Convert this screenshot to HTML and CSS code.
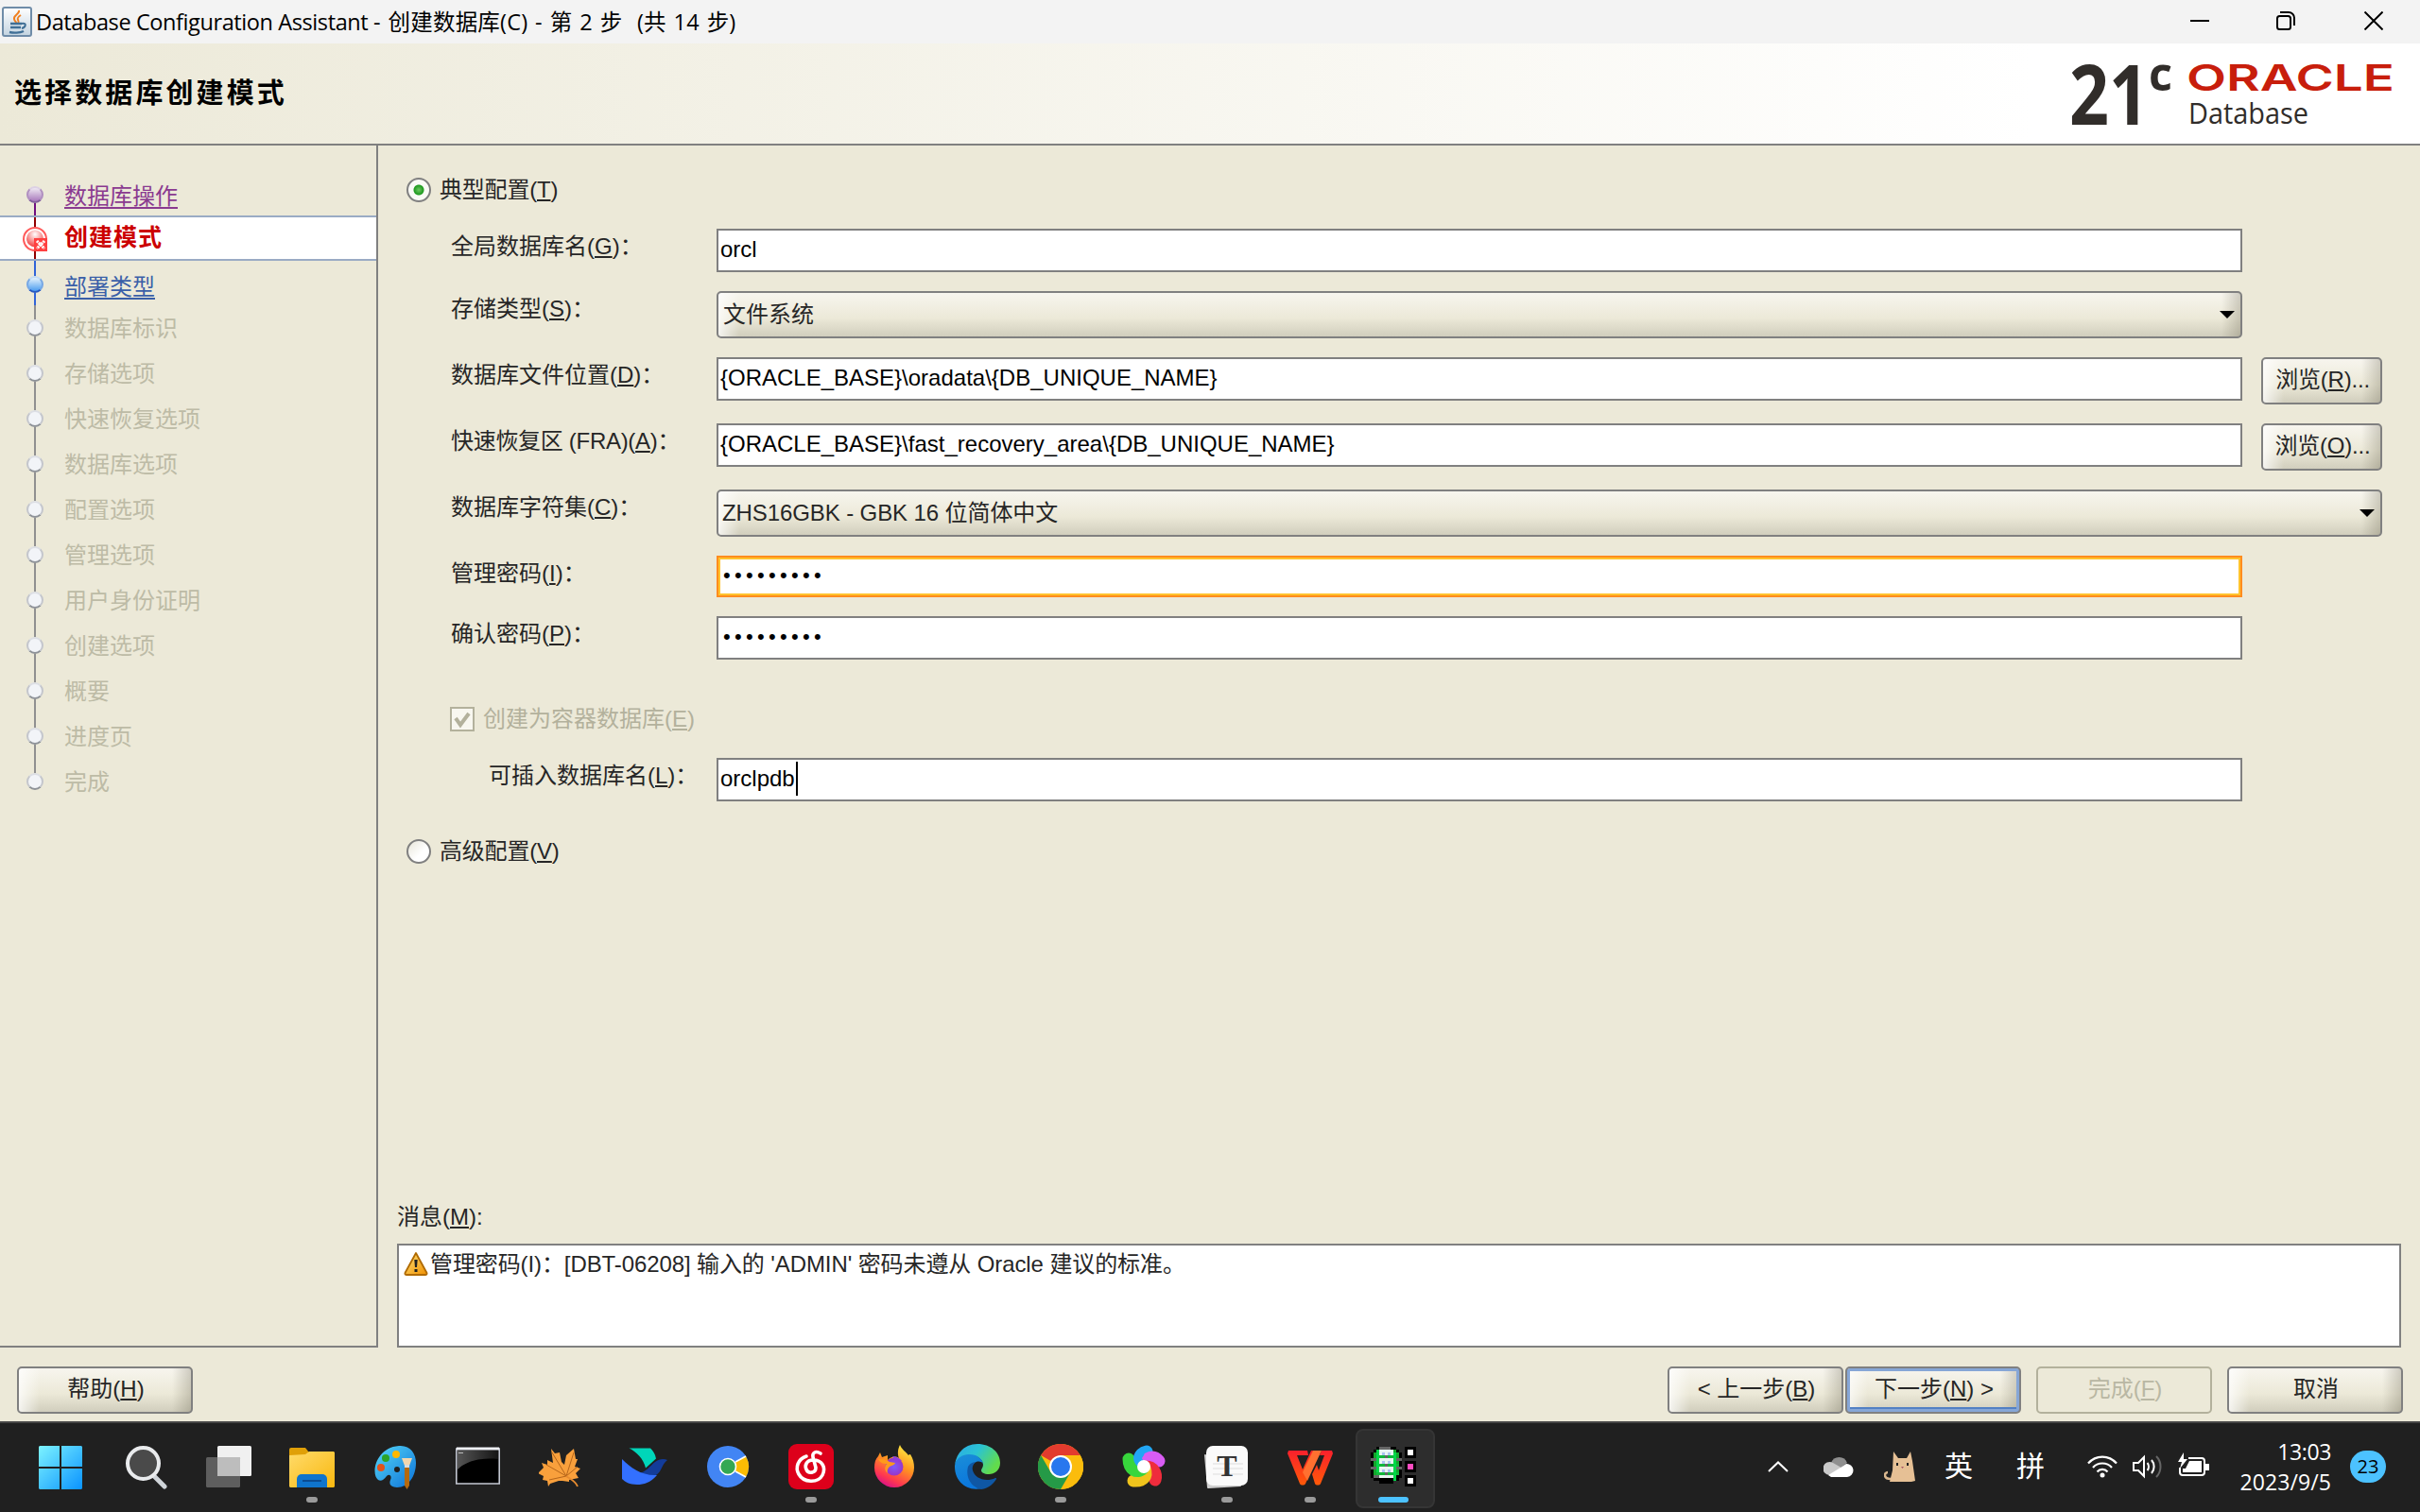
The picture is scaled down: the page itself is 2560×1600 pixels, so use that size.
FILE: index.html
```html
<!DOCTYPE html>
<html lang="zh-CN">
<head>
<meta charset="utf-8">
<title>Database Configuration Assistant</title>
<link rel="stylesheet" href="styles.css">
</head>
<body>
<header class="titlebar">
  <svg class="java" width="32" height="32" viewBox="0 0 32 32">
    <defs><linearGradient id="jv" x1="0" y1="0" x2="0" y2="1"><stop offset="0" stop-color="#fff"/><stop offset="1" stop-color="#c3d3e0"/></linearGradient></defs>
    <rect x="1" y="1" width="30" height="30" rx="2" fill="url(#jv)" stroke="#6f8ca8" stroke-width="2"/>
    <path d="M18 4c1 4-6 5-5 9 0 2 2 3 2 4M20 9c-3 2-4 3-3 5 1 2 1 2 0 4" fill="none" stroke="#f08020" stroke-width="2"/>
    <path d="M9 18h12M9 22h11M8 27c4 1 11 1 15-1" fill="none" stroke="#3f6f96" stroke-width="2.4"/>
    <path d="M21 18c6-1 4 4 0 5" fill="none" stroke="#3f6f96" stroke-width="2"/>
  </svg>
  <span class="title">Database Configuration Assistant <span class="sub">- 创建数据库(C) - 第 2 步&nbsp; (共 14 步)</span></span>
  <svg class="winbtns" width="204" height="20" viewBox="0 0 204 20" fill="none" stroke="#000" stroke-width="2">
    <path d="M0 10h20M184.500.500l19 19M203.500.500l-19 19"/>
    <rect x="92" y="5" width="14" height="14" rx="2.500"/>
    <path d="M95 1h9a6 6 0 0 1 6 6v8"/>
  </svg>
</header>

<section class="banner">
  <h1>选择数据库创建模式</h1>
  <svg class="logo" width="346" height="80" viewBox="0 0 346 80">
    <text class="lg-num" x="0" y="73" textLength="84" lengthAdjust="spacingAndGlyphs">21</text>
    <text class="lg-c" x="84" y="37" textLength="25" lengthAdjust="spacingAndGlyphs">c</text>
    <text class="lg-oracle" x="124" y="37" textLength="220" lengthAdjust="spacingAndGlyphs">ORACLE</text>
    <text class="lg-db" x="126" y="72" textLength="127" lengthAdjust="spacingAndGlyphs">Database</text>
  </svg>
</section>

<div class="work">
  <ol class="steps">
    <li class="first"><i class="rail"><b></b></i><span>数据库操作</span></li>
    <li class="current"><i class="rail"><svg width="26" height="26" viewBox="0 0 26 26">
      <defs><radialGradient id="rd" cx=".5" cy=".25" r=".8"><stop offset="0" stop-color="#fff"/><stop offset="1" stop-color="#f03030"/></radialGradient></defs>
      <circle cx="13" cy="13" r="12" fill="#fff" stroke="#ff5a5a" stroke-width="2"/><circle cx="13" cy="12.500" r="9" fill="url(#rd)"/>
      <path d="M12 12h14v14H12z" fill="#ff4040"/><path d="M15 15l8 8M23 15l-8 8" stroke="#fff" stroke-width="3" stroke-dasharray="2 .7"/></svg></i><span>创建模式</span></li>
    <li class="next"><i class="rail"><b></b></i><span>部署类型</span></li>
    <li><i class="rail"><b></b></i><span>数据库标识</span></li>
    <li><i class="rail"><b></b></i><span>存储选项</span></li>
    <li><i class="rail"><b></b></i><span>快速恢复选项</span></li>
    <li><i class="rail"><b></b></i><span>数据库选项</span></li>
    <li><i class="rail"><b></b></i><span>配置选项</span></li>
    <li><i class="rail"><b></b></i><span>管理选项</span></li>
    <li><i class="rail"><b></b></i><span>用户身份证明</span></li>
    <li><i class="rail"><b></b></i><span>创建选项</span></li>
    <li><i class="rail"><b></b></i><span>概要</span></li>
    <li><i class="rail"><b></b></i><span>进度页</span></li>
    <li class="last"><i class="rail"><b></b></i><span>完成</span></li>
  </ol>

  <main class="content">
    <div class="radio typical"><i class="dot on"></i><span>典型配置(<u>T</u>)</span></div>
    <div class="row"><label>全局数据库名(<u>G</u>)：</label><div class="field">orcl</div></div>
    <div class="row g20"><label>存储类型(<u>S</u>)：</label><div class="combo">文件系统</div></div>
    <div class="row g20"><label>数据库文件位置(<u>D</u>)：</label><div class="field">{ORACLE_BASE}\oradata\{DB_UNIQUE_NAME}</div><button class="btn browse">浏览(<u>R</u>)...</button></div>
    <div class="row g20"><label class="fra">快速恢复区 (FRA)(<u>A</u>)：</label><div class="field">{ORACLE_BASE}\fast_recovery_area\{DB_UNIQUE_NAME}</div><button class="btn browse">浏览(<u>O</u>)...</button></div>
    <div class="row g20"><label>数据库字符集(<u>C</u>)：</label><div class="combo wide">ZHS16GBK - GBK 16 位简体中文</div></div>
    <div class="row g20"><label>管理密码(<u>I</u>)：</label><div class="field pw focus">•••••••••</div></div>
    <div class="row g20"><label>确认密码(<u>P</u>)：</label><div class="field pw">•••••••••</div></div>
    <div class="check"><svg width="26" height="26" viewBox="0 0 26 26"><rect x="1" y="1" width="24" height="24" fill="#f8f7f0" stroke="#b3b19c" stroke-width="2"/><path d="M6 12l5 7 9-12" fill="none" stroke="#b3b19c" stroke-width="4"/></svg><span>创建为容器数据库(<u>E</u>)</span></div>
    <div class="row pdb"><label>可插入数据库名(<u>L</u>)：</label><div class="field">orclpdb<i class="caret"></i></div></div>
    <div class="radio advanced"><i class="dot"></i><span>高级配置(<u>V</u>)</span></div>
    <div class="msg-label">消息(<u>M</u>):</div>
    <div class="msg"><svg width="26" height="26" viewBox="0 0 26 26">
      <defs><linearGradient id="wn" x1="0" y1="0" x2="1" y2="1"><stop offset="0" stop-color="#ffe27a"/><stop offset="1" stop-color="#f09000"/></linearGradient></defs>
      <path d="M13 2L24.500 23a1.500 1.500 0 0 1-1 2H2.500a1.500 1.500 0 0 1-1-2z" fill="url(#wn)" stroke="#b06a00" stroke-width="1.800" stroke-linejoin="round"/><path d="M11.300 9h3.400l-.7 8h-2zM11.500 19h3v3h-3z" fill="#222"/></svg><span>管理密码(I)：[DBT-06208] 输入的 'ADMIN' 密码未遵从 Oracle 建议的标准。</span></div>
  </main>
</div>

<footer class="actions">
  <button class="btn">帮助(<u>H</u>)</button>
  <button class="btn prev">&lt; 上一步(<u>B</u>)</button>
  <button class="btn default">下一步(<u>N</u>) &gt;</button>
  <button class="btn disabled">完成(<u>F</u>)</button>
  <button class="btn">取消</button>
</footer>

<nav class="taskbar">
  <div class="apps">
    <div class="app start"><svg viewBox="0 0 48 48"><defs><linearGradient id="wi" gradientUnits="userSpaceOnUse" x1="1" y1="2" x2="47" y2="48"><stop offset="0" stop-color="#7df3ff"/><stop offset="1" stop-color="#0a93ff"/></linearGradient></defs><path d="M2 2h21v22H1V3zM25 2h21l1 1v21H25zM1 26h22v22H2l-1-1zM25 26h22v21l-1 1H25z" fill="url(#wi)"/></svg></div>
    <div class="app"><svg viewBox="0 0 48 48"><path d="M32 33l12 12" stroke="#cfd4d9" stroke-width="5" stroke-linecap="round"/><circle cx="21.500" cy="20.500" r="16.500" fill="#4a4a4a" stroke="#e9ebed" stroke-width="4"/></svg></div>
    <div class="app"><svg viewBox="0 0 48 48"><rect x="12" y="2" width="36" height="32" rx="1.500" fill="#f0f0f0"/><rect y="14" width="36" height="32" rx="1.500" fill="#5e5e5e"/><path d="M12 14h24v20H12z" fill="#bdbdbd"/></svg></div>
    <div class="app run"><svg viewBox="0 0 48 48"><defs><linearGradient id="fd" x1="0" y1="0" x2="1" y2="1"><stop offset="0" stop-color="#ffdb6b"/><stop offset="1" stop-color="#f9b80f"/></linearGradient></defs><path d="M0 6a2 2 0 0 1 2-2h15l4 5v6H0z" fill="#e0a008"/><path d="M0 12l17-1 4-3h26l1 1v36l-1 1H1l-1-1z" fill="url(#fd)"/><path d="M8 46V37a5 5 0 0 1 5-5h22a5 5 0 0 1 5 5v9z" fill="#0f74cc"/><path d="M14 39h20" stroke="#0a4c92" stroke-width="2"/></svg></div>
    <div class="app"><svg viewBox="0 0 48 48"><defs><linearGradient id="pt" x1="0" y1="0" x2="1" y2="1"><stop offset="0" stop-color="#56d8f8"/><stop offset="1" stop-color="#0c72d8"/></linearGradient></defs><path d="M28 2c12-1 18 8 18 18 0 14-8 26-20 26-6 0-9-3-7-8 2-4-1-7-4-4-3 4-6 6-9 4-8-6-3-34 22-36z" fill="url(#pt)"/><ellipse cx="14" cy="15" rx="4" ry="4" fill="#2ba428"/><circle cx="25" cy="11" r="4" fill="#ffb800"/><circle cx="9" cy="25" r="4" fill="#e2531c"/><circle cx="26" cy="27" r="3" fill="#202020"/><path d="M31 15h11l-3 8h-5z" fill="#f2d6ae"/><path d="M34 22h5v4h-5z" fill="#d8dce0"/><path d="M34 25h5v19l-2.500 4L34 44z" fill="#b4690e"/></svg></div>
    <div class="app"><svg viewBox="0 0 48 48"><defs><linearGradient id="cm" x1="0" y1="0" x2="1" y2="0"><stop offset="0" stop-color="#555"/><stop offset="1" stop-color="#151515"/></linearGradient></defs><path d="M.8 5h45.400v37H.8z" fill="#000" stroke="#c3c7d2" stroke-width="1.600"/><path d="M2 7h43v9C24 14 10 19 2 27z" fill="url(#cm)"/><path d="M1 5h45" stroke="#eef0f6" stroke-width="3"/><path d="M3 9.500h5" stroke="#bbb"/></svg></div>
    <div class="app"><svg viewBox="0 0 48 48"><path d="M13 5l4 5 5-1 2 10 3 3 2-10 8-7 2 11 2 0-3 8 6 2-5 5 3 5-10 2 0 2-7-1-4 0-9 3-2 3-1-6-5-1 1-4-6-3 6-6-2-5 6 2 0-5 6 3z" fill="#f9a03c"/><path d="M29 34L14 9M29 34l8-25M29 34l12-10M29 34L8 22M29 34l-18 4" fill="none" stroke="#b5651a" stroke-width="1"/><path d="M29 34c4 3 10 5 12 11" fill="none" stroke="#e88c30" stroke-width="1.800"/></svg></div>
    <div class="app"><svg viewBox="0 0 48 48"><path d="M7.500 4.500H30c3 3 5 6 6 11l-11 10C23 16 15 8 7.500 4.500z" fill="#00d6b9"/><path d="M48 17c-4 3-5 7-8 12-7 10-17 5-22 2 7-1 12-8 17-12 4-3 9-4 13-2z" fill="#133c9a"/><path d="M0 16c9 9 21 18 37 17-7 8-14 10-21 10-8 0-13-3-16-6z" fill="#3370ff"/></svg></div>
    <div class="app"><svg viewBox="0 0 48 48"><circle cx="24" cy="24" r="22" fill="#4285f4"/><path d="M32 19l11-6a22 22 0 0 1 0 22l-11-6z" fill="#fbbc04"/><path d="M32 19l11-6M32 29l11 6" stroke="#fff" stroke-width="1.600"/><circle cx="24" cy="24" r="8.500" fill="#34a853" stroke="#fff" stroke-width="1.600"/></svg></div>
    <div class="app run"><svg viewBox="0 0 48 48"><rect width="48" height="48" rx="9" fill="#dd001b"/><path d="M19 13C10 16 7 25 11 32c5 9 20 10 25 1 4-8 0-16-10-16-7 0-9 6-7 10 2 5 10 4 10-2l-3-11c-1-5 3-7 8-4" fill="none" stroke="#fff" stroke-width="3.600" stroke-linecap="round"/></svg></div>
    <div class="app"><svg viewBox="0 0 48 48"><defs><linearGradient id="fx" x1=".8" y1="0" x2=".3" y2="1"><stop offset="0" stop-color="#fff044"/><stop offset=".45" stop-color="#ff9420"/><stop offset=".8" stop-color="#ff3750"/><stop offset="1" stop-color="#d6108c"/></linearGradient><radialGradient id="fp"><stop offset="0" stop-color="#7a5cff"/><stop offset="1" stop-color="#9a35c8"/></radialGradient></defs><path d="M30 1c2 5 6 7 9 11 1-1 1-1 2-1 3 5 4 9 4 14a21 21 0 0 1-42 0c0-5 1-9 4-12l2-4 2 5 6-2v5c3-3 8-5 12-2-2-5-1-10 1-14z" fill="url(#fx)"/><circle cx="24" cy="24" r="9.500" fill="url(#fp)"/><path d="M7 16c5-1 9 1 12 3l6 1c-1 3-5 3-6 4-2 2-3 4-2 7-4-3-3-8-1-10-4 0-7-1-9-5z" fill="#ff9a1c"/><path d="M22 13c4 0 8 2 10 5-3-1-5 0-6 1" fill="#8f3fe0"/></svg></div>
    <div class="app"><svg viewBox="0 0 48 48"><defs><linearGradient id="eg" x1="0" y1="0" x2="1" y2=".5"><stop offset="0" stop-color="#2aa8e8"/><stop offset=".5" stop-color="#2bc3d2"/><stop offset="1" stop-color="#62dc4c"/></linearGradient><linearGradient id="eb" x1="0" y1="0" x2=".3" y2="1"><stop offset="0" stop-color="#1b8fd8"/><stop offset="1" stop-color="#0a76dc"/></linearGradient></defs><path d="M0 22C2 8 12 0 24 0c14 0 24 9 24 20 0 8-6 12-12 12-5 0-8-2-8-4s2-3 2-6c0-5-5-10-14-10C8 12 2 16 0 22z" fill="url(#eg)"/><path d="M0 24c0-7 6-13 15-13 9 0 14 5 15 10-2-3-6-3-9-1-6 4-4 14 2 18l6 9c-17 4-29-8-29-23z" fill="url(#eb)"/><path d="M14 24c-3 12 4 22 14 24 8-1 14-7 16-11 0-1 0-1-1-1-11 5-22 0-24-8-1-4 1-8 4-9-5 0-8 3-9 5z" fill="#0f57a4"/></svg></div>
    <div class="app run"><svg viewBox="0 0 48 48"><circle cx="24" cy="24" r="24" fill="#fbbc0c"/><path d="M24 24L3.200 12a24 24 0 0 1 41.600 0z" fill="#e33b2e"/><path d="M24 12h20.800A24 24 0 0 1 24 48l10.400-18z" fill="#fbbc0c"/><path d="M3.200 12A24 24 0 0 0 24 48l10.400-18-20.800 0z" fill="#259a47"/><circle cx="24" cy="24" r="12" fill="#fff"/><circle cx="24" cy="24" r="10" fill="#2877ee"/></svg></div>
    <div class="app"><svg viewBox="0 0 48 48"><g fill="none" stroke-width="13" stroke-linecap="round"><path d="M24 22C18 17 19 10 27 8" stroke="#22a6f4"/><path d="M25 22C26 14 34 11 40 18" stroke="#d95cf4"/><path d="M26 24c8 0 12 7 10 14" stroke="#ef2c3c"/><path d="M25 26c3 8-1 14-12 13" stroke="#f0c41c"/><path d="M23 26C17 32 8 27 8 16" stroke="#37d63c"/><path d="M22 22C17 18 16 14 20 10" stroke="#22a6f4" stroke-width="9"/></g><circle cx="24" cy="24" r="7" fill="#fff"/></svg></div>
    <div class="app run"><svg viewBox="0 0 48 48"><path d="M1 12l3 34 34-2z" fill="#cfcfcf" stroke="#cfcfcf" stroke-width="2" stroke-linejoin="round"/><rect x="2" y="2" width="44" height="42" rx="7" fill="#fafafa"/><path d="M9 21h32M9 26h32M9 32h32" stroke="#ddd"/><text class="typora" x="24" y="34" text-anchor="middle">T</text></svg></div>
    <div class="app run"><svg viewBox="0 0 48 48"><defs><linearGradient id="wp" x1="0" y1="0" x2="0" y2="1"><stop offset="0" stop-color="#f9202c"/><stop offset="1" stop-color="#ff5a08"/></linearGradient></defs><path d="M1 7h20l1 5H10l6 15 9-20h10L19 42c-1 2-5 2-6 0L0 10z" fill="url(#wp)"/><path d="M36 7h11l1 3-13 32c-1 2-5 2-6 0l-3-10 5-10 2 6 6-16h-5z" fill="url(#wp)"/><path d="M27 7h9L21 39l-5-9z" fill="#ff7030"/></svg></div>
    <div class="app active"><svg viewBox="0 0 48 48" shape-rendering="crispEdges"><path d="M6 3h21v3h3v3h3v27h-3v3h-6v3H9v-3H3v-3H0V9h3V6h3z" fill="#000"/><path d="M6 6h21v3h3v24h-3v3H6v-3H3V9h3z" fill="#14a52c"/><path d="M9 6h15v30H9z" fill="#e8f6f2"/><path d="M9 12h18v3H6zM6 21h24v3H6zM6 30h24v3H6z" fill="#10b83a"/><path d="M0 15h6v3H0zM24 15h9v3h-9zM0 24h6v3H0zM24 24h9v3h-9zM3 33h6v3H3zM15 12h3v3h-3zM15 21h3v3h-3zM15 30h3v3h-3zM9 3h12v3H9z" fill="#666"/><path d="M12 9h3v3h-3zM18 9h3v3h-3zM12 18h3v3h-3zM18 18h3v3h-3zM12 27h3v3h-3zM18 27h3v3h-3z" fill="#a9c4f0"/><path d="M6 6h3v24H6zM24 9h3v30h-3z" fill="#00d848"/><path d="M36 3h12v12H36zM36 18h12v12H36zM36 33h12v12H36z" fill="#000"/><path d="M39 6h6v6h-6zM39 36h6v6h-6z" fill="#fff"/><path d="M39 21h6v6h-6z" fill="#ff4cc0"/></svg></div>
  </div>
  <div class="tray">
    <svg class="t-chev" width="22" height="12" viewBox="0 0 22 12"><path d="M1 11L11 1.500 21 11" fill="none" stroke="#fff" stroke-width="2"/></svg>
    <svg class="t-cloud" width="32" height="22" viewBox="0 0 32 22"><path d="M8 7a9 9 0 0 1 17 0l-8 6z" fill="#8f8f8f"/><path d="M7 20a7 7 0 1 1 3-13l14 8-12 6z" fill="#c9c9c9"/><path d="M5 20l13-8 6-4a7 7 0 0 1 1 14H8z" fill="#fff"/></svg>
    <svg class="t-cat" width="33" height="32" viewBox="0 0 33 32"><path d="M7 29c-8 0-7-7-3-7" fill="none" stroke="#d9b78f" stroke-width="2.500"/><path d="M10 0l5 7h9l4-7 2 10 3 21-4 1H6l3-12z" fill="#e6c095"/><path d="M13 12h2v3h-2zM24 12h2v3h-2z" fill="#222"/><path d="M18 16h3l-1.500 2z" fill="#a56"/></svg>
    <span class="ime">英</span>
    <span class="ime two">拼</span>
    <svg class="t-wifi" width="32" height="24" viewBox="0 0 32 24" fill="none" stroke="#fff" stroke-width="2.200"><path d="M1 8.500C9-.8 23-.8 31 8.500M6 13c5-6 15-6 20 0M10.500 17.500c3-3.500 8-3.500 11 0"/><circle cx="16" cy="21" r="2.500" fill="#fff" stroke="none"/></svg>
    <svg class="t-vol" width="33" height="26" viewBox="0 0 33 26" fill="none" stroke="#fff" stroke-width="2"><path d="M1 9v8h5l6 6V3L6 9zM15.500 9c2 2 2 6 0 8"/><path d="M20 6c3.500 4 3.500 10 0 14" /><path d="M25 2c6 6 6 16 0 22" stroke="#666"/></svg>
    <svg class="t-bat" width="33" height="26" viewBox="0 0 33 26"><path d="M11 6h14a3 3 0 0 1 3 3v12a3 3 0 0 1-3 3H5a3 3 0 0 1-3-3v-5" fill="none" stroke="#fff" stroke-width="2"/><path d="M12 9h13v12H5v-4h3zM29 12h4v7h-4z" fill="#fff"/><path d="M6 0L0 10h4l-2 7 8-10H6z" fill="#fff"/></svg>
    <div class="clock"><span>13:03</span><span class="date">2023/9/5</span></div>
    <span class="badge">23</span>
  </div>
</nav>
</body>
</html>
```

FILE: styles.css
```css
* { box-sizing: border-box; }

body {
  margin: 0;
  width: 2560px;
  height: 1600px;
  overflow: hidden;
  display: flex;
  flex-direction: column;
  background: #ece9d8;
  color: #000;
  font: 24px/36px "Liberation Sans", "Noto Sans CJK SC", sans-serif;
}

svg { display: block; flex: none; }
u { text-decoration-thickness: 2px; text-underline-offset: 2px; text-decoration-skip-ink: none; }
i { font-style: normal; }

/* Window title bar */
.titlebar {
  flex: none;
  height: 46px;
  padding-left: 2px;
  display: flex;
  align-items: center;
  background: #f3f3f3;
}
.title {
  margin-left: 4px;
  white-space: nowrap;
  font: 23.5px/46px "Open Sans", "Noto Sans CJK SC", sans-serif;
  letter-spacing: -0.4px;
}
.sub { letter-spacing: .2px; word-spacing: 1.5px; }
.winbtns { margin: 0 39px 2px auto; }

/* Page heading */
.banner {
  flex: none;
  height: 108px;
  padding: 0 25px 0 15px;
  display: flex;
  align-items: center;
  justify-content: space-between;
  border-bottom: 2px solid #808080;
  background: linear-gradient(90deg, #ece9d8, #fff 2150px);
}
.banner h1 {
  margin: 0;
  font: 700 29px/40px "Liberation Sans", "Noto Sans CJK SC", sans-serif;
  letter-spacing: 3.1px;
}
.logo { overflow: visible; }
.lg-num { font: 700 87px "Open Sans", sans-serif; fill: #312d2a; }
.lg-c { font: 700 50px "Open Sans", sans-serif; fill: #312d2a; }
.lg-oracle { font: 600 38.5px Inter, sans-serif; fill: #c81e0c; }
.lg-db { font: 31px "Open Sans", sans-serif; fill: #312d2a; }

/* Wizard steps */
.work { flex: none; display: flex; height: 1272px; }
.steps {
  width: 400px;
  margin: 0;
  padding: 28px 0 0;
  list-style: none;
  border: solid #808080;
  border-width: 0 2px 2px 0;
}
.steps li {
  height: 48px;
  padding-left: 24px;
  display: flex;
  gap: 18px;
  color: #bdbba6;
  line-height: 49px;
  --rail: #909090;
}
.rail { width: 26px; display: flex; flex-direction: column; align-items: center; }
.rail::before, .rail::after { content: ""; width: 2px; flex: 1; background: var(--rail); }
.rail b {
  width: 18px;
  height: 18px;
  border-radius: 50%;
  background: #f2f4f8;
  border: 2px solid;
  border-color: #dcdee4 #c4c6cc #8e9298;
}
.steps .first { height: 46px; line-height: 52px; color: #8a3a90; --rail: #701080; }
.first .rail::before { flex: 0 0 15px; background: none; }
.first b { background: linear-gradient(#eee8f2, #a878bc); border-color: #dcd0e4 #b090c0 #80609a; }
.steps span { height: 30px; }
.first span, .next span { text-decoration: underline; text-decoration-thickness: 2px; text-underline-offset: 3px; text-decoration-skip-ink: none; }
.steps .current {
  border: solid #9aabc4;
  border-width: 2px 0;
  background: #fff;
  color: #c00;
  font-weight: 700;
  font-size: 25px;
  letter-spacing: 1px;
  line-height: 43px;
  --rail: #900000;
}
.current .rail::before { flex: 0 0 10px; }
.steps .next { height: 47px; line-height: 55px; color: #3a5fa8; --rail: #3264d8; }
.next .rail::before { flex: 0 0 16px; }
.next b { background: linear-gradient(#e4f2fc, #4a9cf0); border-color: #c4dcf4 #78a8e4 #2858c0; }
.last .rail::after { background: none; }

/* Form */
.content { width: 2160px; padding: 28px 0 0 20px; display: flex; flex-direction: column; }
.content, .actions { color: #262626; }
.radio { display: flex; align-items: center; gap: 9px; height: 38px; padding-left: 10px; letter-spacing: -.2px; }
.radio span { padding-bottom: 1px; }
.dot {
  width: 26px;
  height: 26px;
  border: 2px solid #808080;
  border-radius: 50%;
  background: linear-gradient(135deg, #e8e6da, #fff 60%);
}
.dot.on { background: radial-gradient(circle at center, #6cc860 0, #1f9a20 5px, transparent 6px), #fafaf6; }
.row { display: flex; align-items: flex-start; margin: 0; }
.row label { width: 338px; padding-left: 57px; white-space: nowrap; line-height: 37px; }
.fra { letter-spacing: -.3px; }
.typical + .row { margin-top: 22px; }
.field {
  width: 1614px;
  height: 46px;
  padding-left: 2px;
  display: flex;
  border: 2px solid #808080;
  background: #fff;
  color: #000;
  line-height: 39px;
}
.g20 { margin-top: 20px; }
.combo, .btn {
  border: 2px solid #808080;
  border-radius: 5px;
  background:
    linear-gradient(90deg, rgba(255,255,255,.75), rgba(255,255,255,0) 22px),
    linear-gradient(270deg, rgba(90,85,65,.26), rgba(90,85,65,0) 20px),
    linear-gradient(#f7f5ee, #ece9d8 58%, #d1cebd);
}
.combo {
  width: 1614px;
  height: 50px;
  padding: 0 6px 0 5px;
  display: flex;
  align-items: center;
  justify-content: space-between;
}
.combo::after {
  content: "";
  border: solid transparent;
  border-width: 8px 8px 0;
  border-top-color: #000;
}
.wide { width: 1762px; padding-left: 4px; letter-spacing: -.1px; }
.btn {
  width: 186px;
  height: 50px;
  padding: 0 0 2px 2px;
  color: inherit;
  font: inherit;
  white-space: nowrap;
}
.browse { width: 128px; margin: 0 0 0 20px; letter-spacing: -.2px; }
.pw { padding-left: 5px; font-size: 22px; letter-spacing: 4.3px; }
.focus {
  height: 44px;
  line-height: 38px;
  border-color: #ff8c1e;
  box-shadow: inset 0 0 0 2px #ffc32e;
}
.check {
  height: 26px;
  margin-top: 50px;
  padding-left: 56px;
  display: flex;
  gap: 9px;
  color: #b3b19c;
  line-height: 25px;
}
.pdb { margin-top: 28px; }
.pdb label { padding-left: 97px; }
.caret { width: 2px; height: 36px; margin: 2px 0 0 1px; background: #000; }
.advanced { margin-top: 34px; }
.msg-label { margin-top: 350px; }
.msg {
  width: 2120px;
  height: 110px;
  margin-top: 10px;
  padding: 6px 5px;
  display: flex;
  gap: 2px;
  border: 2px solid #808080;
  background: #fff;
  line-height: 28px;
}
.msg span { letter-spacing: -.1px; }

/* Wizard buttons */
.actions { flex: none; height: 78px; padding: 20px 18px 0; display: flex; }
.prev { margin-left: auto; }
.default { margin: 0 16px 0 2px; box-shadow: inset 0 0 0 3px #86a6d6, inset 0 -4px 0 1px #5280c4; }
.disabled { margin-right: 16px; background: none; border-color: #b3b19c; color: #b9b7a3; }

/* Taskbar */
.taskbar {
  flex: none;
  height: 96px;
  padding-left: 20px;
  display: flex;
  justify-content: space-between;
  border-top: 2px solid #454545;
  background: #202020;
  color: #fff;
}
.apps { display: flex; }
.app {
  position: relative;
  width: 88px;
  height: 94px;
  display: flex;
  justify-content: center;
  padding-top: 22px;
}
.start { margin-right: 2px; }
.app svg { width: 48px; height: 48px; z-index: 1; }
.app.run::after, .app.active::after {
  content: "";
  position: absolute;
  top: 78px;
  width: 12px;
  height: 6px;
  border-radius: 3px;
  background: #9a9a9a;
}
.app.active::after { width: 32px; background: #4cc2ff; }
.app.active::before {
  content: "";
  position: absolute;
  left: 4px;
  top: 6px;
  width: 80px;
  height: 80px;
  border: 2px solid #353535;
  border-radius: 8px;
  background: #2d2d2d;
}
.typora { font: 700 32px "Liberation Serif", serif; fill: #333; }
.tray { display: flex; align-items: center; padding: 0 36px 2px 0; }
.t-cloud { margin-left: 37px; }
.t-cat { margin-left: 32px; }
.ime { margin-left: 31px; font-size: 30px; line-height: 40px; }
.ime.two { margin-left: 46px; }
.t-wifi { margin-left: 45px; }
.t-vol { margin-left: 16px; }
.t-bat { margin-left: 15px; margin-bottom: 4px; }
.clock {
  width: 129px;
  display: flex;
  flex-direction: column;
  text-align: right;
  font: 23px/32px "Open Sans", sans-serif;
  letter-spacing: -.4px;
}
.date { letter-spacing: .1px; }
.badge {
  width: 38px;
  height: 34px;
  margin-left: 20px;
  border-radius: 17px;
  background: #4cc2ff;
  color: #000;
  text-align: center;
  font: 20px/34px "Open Sans", sans-serif;
}
```
